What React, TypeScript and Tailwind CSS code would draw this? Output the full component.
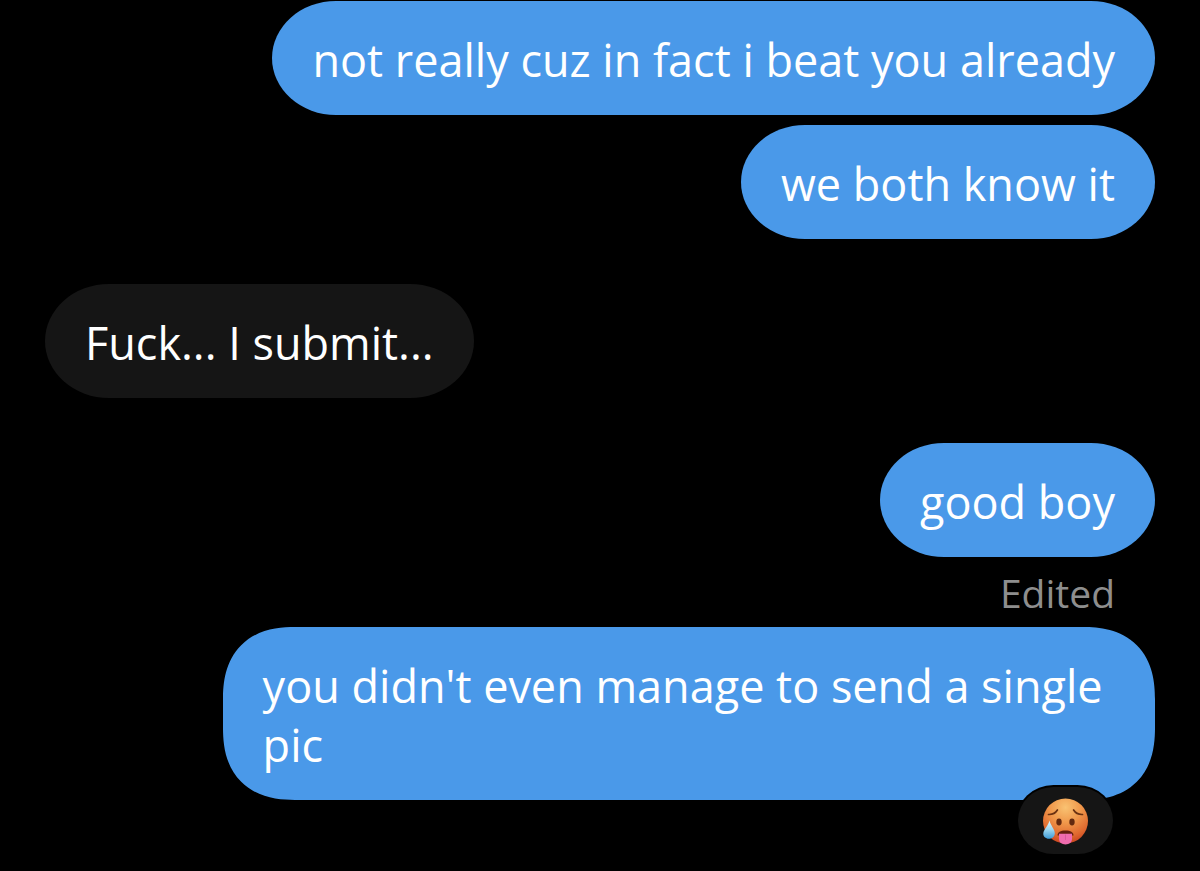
import type { ReactNode } from "react";

type Side = "sent" | "received";

function Bubble({
  side,
  multiline = false,
  children,
}: {
  side: Side;
  multiline?: boolean;
  children: ReactNode;
}) {
  const tone = side === "sent" ? "bg-[#4a99e9]" : "bg-[#151515]";
  const shape = multiline
    ? "rounded-[72px] [corner-shape:superellipse(1.25)]"
    : "rounded-[64px/57px]";
  return (
    <p
      className={`${tone} ${shape} px-10 pt-[29px] pb-[26px] text-[45px] leading-[59px] text-white`}
    >
      {children}
    </p>
  );
}

function HotFace() {
  return (
    <svg viewBox="0 0 48 48" className="size-12" role="img" aria-label="Hot face">
      <defs>
        <radialGradient id="face" cx="0.5" cy="0.2" r="0.85">
          <stop offset="0" stopColor="#f9c272" />
          <stop offset="0.4" stopColor="#f0984b" />
          <stop offset="0.75" stopColor="#e0692f" />
          <stop offset="1" stopColor="#c43a1c" />
        </radialGradient>
        <linearGradient id="drop" x1="0" y1="0" x2="0" y2="1">
          <stop offset="0" stopColor="#e4f5fb" />
          <stop offset="0.5" stopColor="#9bd6f0" />
          <stop offset="1" stopColor="#3e9bd6" />
        </linearGradient>
      </defs>
      <circle cx="23.5" cy="24" r="22.5" fill="url(#face)" />
      <path
        d="M6.500 17.500c3.800.2 6.900-1.300 8.900-4.500M31.600 13c2 3.200 5.100 4.700 8.900 4.500"
        fill="none"
        stroke="#6b3212"
        strokeWidth="1.700"
        strokeLinecap="round"
      />
      <ellipse cx="17" cy="25" rx="2.700" ry="3.400" fill="#63290f" />
      <ellipse cx="30" cy="25" rx="2.700" ry="3.400" fill="#63290f" />
      <path d="M15.500 38.500c0-3.500 3-5 8-5s8 1.500 8 5z" fill="#65200f" />
      <path
        d="M17 36.800h13v5c0 3.600-2.800 5.700-6.500 5.700S17 45.400 17 41.800z"
        fill="#f06cae"
      />
      <path d="M23.500 38v4.500" stroke="#d95a9c" strokeWidth="1" strokeLinecap="round" />
      <path
        d="M7.500 23.500c1 5 5.300 8.500 5.300 12.800 0 3.400-2.600 5.500-5.900 5.500S1 39.500 1.300 36.300c.4-4 4.800-7.200 6.200-12.800z"
        fill="url(#drop)"
      />
    </svg>
  );
}

export default function App() {
  return (
    <main className="min-h-screen bg-black px-[45px] pt-px font-['Open_Sans',sans-serif]">
      <ol className="flex flex-col">
        <li className="flex justify-end">
          <Bubble side="sent">not really cuz in fact i beat you already</Bubble>
        </li>
        <li className="mt-2.5 flex justify-end">
          <Bubble side="sent">we both know it</Bubble>
        </li>
        <li className="mt-[45px] flex justify-start">
          <Bubble side="received">Fuck... I submit...</Bubble>
        </li>
        <li className="mt-[45px] flex flex-col items-end">
          <Bubble side="sent">good boy</Bubble>
          <span className="mt-2 px-10 text-[39px] leading-[56px] text-[#8e8e8e]">Edited</span>
        </li>
        <li className="mt-1.5 flex justify-end">
          <div className="relative max-w-[84%]">
            <Bubble side="sent" multiline>
              you didn't even manage to send a single pic
            </Bubble>
            <button
              type="button"
              aria-label="Reaction: hot face"
              className="absolute right-[42px] -bottom-[54px] flex h-[67px] w-[95px] items-center justify-center rounded-[36px/34px] bg-[#151515] ring-2 ring-black"
            >
              <HotFace />
            </button>
          </div>
        </li>
      </ol>
    </main>
  );
}
